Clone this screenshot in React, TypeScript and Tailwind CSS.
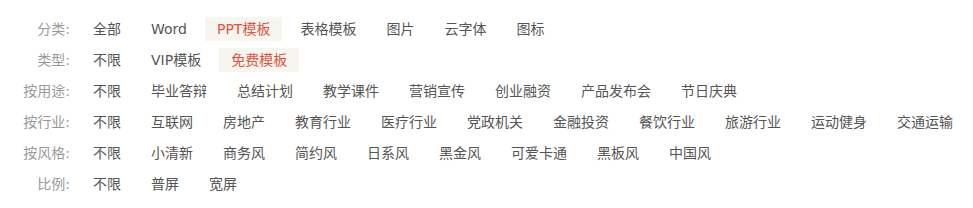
import React from "react";

interface FilterRow {
  label: string;
  items: string[];
  active?: string;
}

const rows: FilterRow[] = [
  {
    label: "分类:",
    items: ["全部", "Word", "PPT模板", "表格模板", "图片", "云字体", "图标"],
    active: "PPT模板",
  },
  {
    label: "类型:",
    items: ["不限", "VIP模板", "免费模板"],
    active: "免费模板",
  },
  {
    label: "按用途:",
    items: [
      "不限",
      "毕业答辩",
      "总结计划",
      "教学课件",
      "营销宣传",
      "创业融资",
      "产品发布会",
      "节日庆典",
    ],
  },
  {
    label: "按行业:",
    items: [
      "不限",
      "互联网",
      "房地产",
      "教育行业",
      "医疗行业",
      "党政机关",
      "金融投资",
      "餐饮行业",
      "旅游行业",
      "运动健身",
      "交通运输",
    ],
  },
  {
    label: "按风格:",
    items: [
      "不限",
      "小清新",
      "商务风",
      "简约风",
      "日系风",
      "黑金风",
      "可爱卡通",
      "黑板风",
      "中国风",
    ],
  },
  {
    label: "比例:",
    items: ["不限", "普屏", "宽屏"],
  },
];

export default function App() {
  return (
    <div className="flex h-[208px] w-[973px] flex-col gap-[7px] bg-white pt-[17px] font-['DejaVu_Sans','Noto_Sans_CJK_SC',sans-serif] text-[14px] leading-[24px]">
      {rows.map((row) => (
        <div key={row.label} className="flex h-[24px] items-center">
          <div className="w-[72px] shrink-0 whitespace-nowrap pr-[2px] text-right text-[#999]">
            {row.label}
          </div>
          <ul className="ml-[9px] flex gap-[6px] whitespace-nowrap">
            {row.items.map((item) => (
              <li
                key={item}
                className={
                  item === row.active
                    ? "h-[24px] bg-[#f6f5f0] px-[12px] text-[#e2533b]"
                    : "h-[24px] px-[12px] text-[#555]"
                }
              >
                {item}
              </li>
            ))}
          </ul>
        </div>
      ))}
    </div>
  );
}
